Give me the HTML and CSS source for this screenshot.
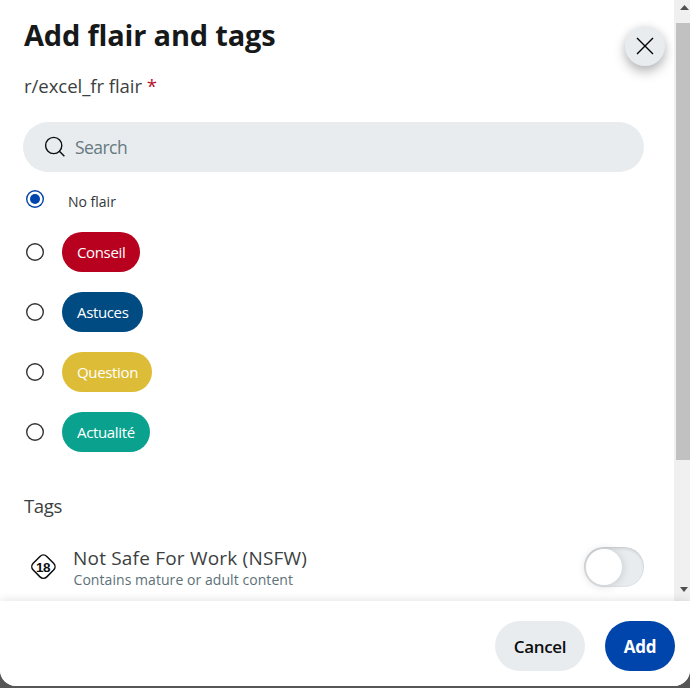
FILE: index.html
```html
<!DOCTYPE html>
<html lang="en">
<head>
<meta charset="utf-8">
<title>Add flair and tags</title>
<link rel="stylesheet" href="styles.css">
</head>
<body>
<main class="dialog">
  <div class="viewport">
    <section class="content">
      <header class="header">
        <div>
          <h1 class="title">Add flair and tags</h1>
          <p class="subtitle">r/excel_fr flair <span class="required">*</span></p>
        </div>
        <button class="close" aria-label="Close"><svg width="20" height="20" viewBox="0 0 20 20"><path d="M2 2l16 16M18 2L2 18" fill="none" stroke="#000" stroke-width="1.4"/></svg></button>
      </header>
      <div class="search">
        <svg width="22" height="22" viewBox="0 0 22 22"><g fill="none" stroke="#0b0d0e" stroke-width="1.4"><circle cx="9.7" cy="9.5" r="8.1"/><path d="M15.4 15.2l5 5"/></g></svg>
        <span class="placeholder">Search</span>
      </div>
      <ul class="flairs">
        <li class="row row-none"><span class="radio checked"></span><span class="none">No flair</span></li>
        <li class="row"><span class="radio"></span><span class="pill conseil">Conseil</span></li>
        <li class="row"><span class="radio"></span><span class="pill astuces">Astuces</span></li>
        <li class="row"><span class="radio"></span><span class="pill question">Question</span></li>
        <li class="row"><span class="radio"></span><span class="pill actualite">Actualité</span></li>
      </ul>
      <h2 class="tags">Tags</h2>
      <div class="tag">
        <svg class="nsfw" width="27" height="27" viewBox="0 0 27 27"><rect x="3.8" y="3.1" width="19.2" height="19.2" rx="4.8" transform="rotate(45 13.4 12.7)" fill="none" stroke="#0b0d0e" stroke-width="1.5"/><text x="13.1" y="17.6" text-anchor="middle" class="age">18</text></svg>
        <div class="tag-text">
          <div class="tag-name">Not Safe For Work (NSFW)</div>
          <div class="tag-desc">Contains mature or adult content</div>
        </div>
        <span class="switch"><span class="knob"></span></span>
      </div>
    </section>
    <div class="scrollbar">
      <svg class="arrow" width="9" height="5" viewBox="0 0 9 5"><path d="M4.5 0L9 5H0z" fill="#505050"/></svg>
      <div class="thumb"></div>
      <svg class="arrow" width="8" height="5" viewBox="0 0 8 5"><path d="M0 0h8L4 5z" fill="#505050"/></svg>
    </div>
  </div>
  <footer class="footer">
    <button class="btn cancel">Cancel</button>
    <button class="btn add">Add</button>
  </footer>
</main>
</body>
</html>
```
FILE: styles.css
```css
* { box-sizing: border-box; }
body { margin: 0; background: #565656; font-family: "Open Sans", "Noto Sans", sans-serif; color: #161819; overflow: hidden; }
h1, h2, p, ul { margin: 0; padding: 0; }
ul { list-style: none; }
button { border: 0; padding: 0; font: inherit; }
svg { display: block; flex: none; }
.dialog { width: 690px; height: 686px; background: #fff; border-radius: 0 0 16px 16px; overflow: hidden; display: flex; flex-direction: column; }
.viewport { height: 601px; display: flex; flex: none; }
.content { width: 674px; padding: 15px 30px 0 23px; overflow: hidden; }
.header { display: flex; justify-content: space-between; height: 107px; }
.title { font-size: 29px; line-height: 40px; font-weight: 700; letter-spacing: -.18px; padding-left: 1px; white-space: nowrap; }
.subtitle { font-size: 18.6px; line-height: 28px; letter-spacing: -.07px; margin-top: 17px; padding-left: 1px; color: #3c3f41; white-space: nowrap; }
.required { color: #b5122c; }
.close { width: 40px; height: 40px; margin: 11px -21px 0 0; border-radius: 50%; background: #e8ecef; display: flex; align-items: center; justify-content: center; box-shadow: 0 6px 12px rgba(0,0,0,.25), 0 1px 10px rgba(0,0,0,.08); }
.search { height: 50px; border-radius: 25px; background: #e8ecef; display: flex; align-items: center; gap: 9px; padding-left: 21px; font-size: 17.5px; letter-spacing: -.55px; color: #667980; }
.row { height: 60px; display: flex; align-items: center; padding-left: 3px; gap: 18px; }
.row-none { height: 50px; gap: 24px; }
.radio { width: 18px; height: 18px; box-shadow: inset 0 0 0 1.4px #333; border-radius: 50%; flex: none; }
.checked { box-shadow: inset 0 0 0 1.4px #0045ac; display: flex; align-items: center; justify-content: center; align-self: flex-start; margin-top: 18px; }
.checked::after { content: ""; width: 10px; height: 10px; border-radius: 50%; background: #0045ac; flex: none; }
.none { font-size: 14px; color: #333638; padding-top: 9px; }
.pill { height: 40px; border-radius: 20px; line-height: 40px; padding-left: 15px; font-size: 15px; letter-spacing: -.35px; color: #fff; white-space: nowrap; }
.conseil { width: 78px; background: #b8001f; }
.astuces { width: 81px; background: #004b82; }
.question { width: 90px; background: #ddbd37; }
.actualite { width: 88px; background: #0aa18f; }
.tags { font-size: 18.6px; line-height: 28px; font-weight: 400; letter-spacing: -.4px; color: #3c3f41; margin-top: 30px; padding-left: 1px; }
.tag { display: flex; align-items: center; height: 60px; margin-top: 17px; padding-left: 7px; }
.age { font: 700 13.5px "Liberation Sans", sans-serif; letter-spacing: -.5px; fill: #0b0d0e; }
.tag-text { margin-left: 16px; flex: 1; white-space: nowrap; }
.tag-name { font-size: 19px; line-height: 24px; letter-spacing: .2px; color: #3c3f41; }
.tag-desc { font-size: 14px; line-height: 19px; letter-spacing: .06px; color: #5c7178; padding-left: .5px; }
.switch { width: 60px; height: 40px; border-radius: 20px; background: #e8ecef; padding: 2px; box-shadow: inset 0 0 0 1px rgba(0,0,0,.03), inset 0 2px 3px rgba(0,0,0,.1); }
.knob { display: block; width: 36px; height: 36px; border-radius: 50%; background: #fff; box-shadow: 0 1px 10px rgba(0,0,0,.16); }
.scrollbar { width: 16px; background: #f0f0f0; padding: 5px 0 9px 2px; display: flex; flex-direction: column; }
.arrow { margin-left: 4px; }
.thumb { height: 437px; margin: 13px 0 auto; background: #c1c1c1; }
.footer { flex: 1; display: flex; justify-content: flex-end; gap: 20px; padding: 20px 15px 0 0; background: #fff; box-shadow: 0 0 10px rgba(0,0,0,.13); position: relative; }
.btn { height: 50px; border-radius: 25px; font-size: 17px; font-weight: 600; letter-spacing: -.3px; }
.cancel { width: 90px; background: #e8ecef; color: #0b0d0e; }
.add { width: 70px; background: #0045ac; color: #fff; font-weight: 700; }
```
